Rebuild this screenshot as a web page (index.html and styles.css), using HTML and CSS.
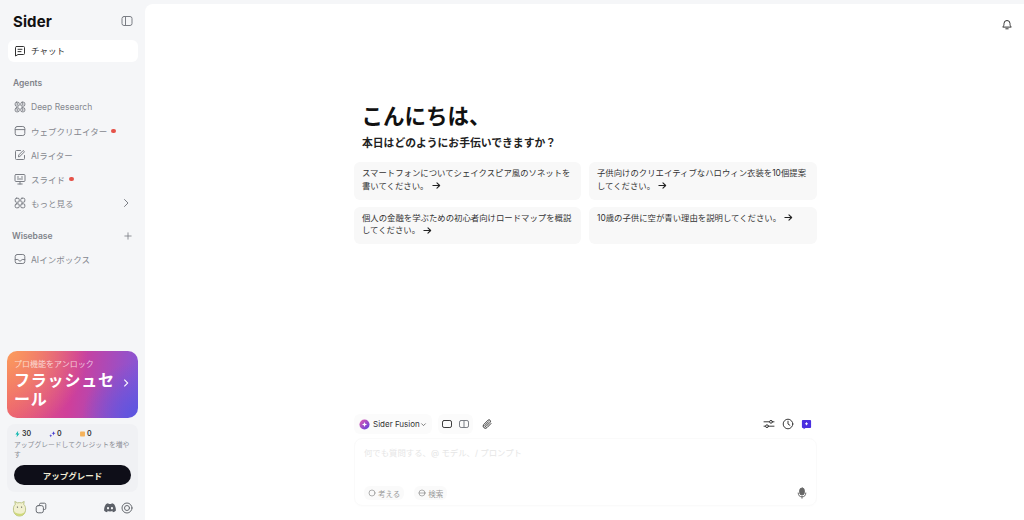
FILE: index.html
```html
<!DOCTYPE html>
<html lang="ja">
<head>
<meta charset="utf-8">
<title>Sider</title>
<link rel="stylesheet" href="styles.css">
</head>
<body>
<div class="app">
  <aside class="sidebar">
    <div class="brand">
      <span class="logo">Sider</span>
      <svg class="ic ic-side" viewBox="0 0 12 12"><rect x="1" y="1.5" width="10" height="9" rx="2"/><path d="M4.5 1.5v9"/></svg>
    </div>
    <div class="nav-item active">
      <svg class="ic" viewBox="0 0 12 12"><path d="M2.5 1.5h7a1 1 0 0 1 1 1v6a1 1 0 0 1-1 1H4L1.5 11V2.5a1 1 0 0 1 1-1z"/><path d="M4 4.3h4M4 6.6h3"/></svg>
      <span>チャット</span>
    </div>
    <div class="section-title">Agents</div>
    <div class="nav-item">
      <svg class="ic" viewBox="0 0 12 12"><rect x="1.2" y="1.2" width="4" height="4" rx="1.4"/><rect x="6.8" y="1.2" width="4" height="4" rx="1.4"/><rect x="1.2" y="6.8" width="4" height="4" rx="1.4"/><rect x="6.8" y="6.8" width="4" height="4" rx="1.4"/><path d="M3.200 2.400v1.600M8.800 2.400v1.600M3.200 8v1.600M8.800 8v1.600"/></svg>
      <span>Deep Research</span>
    </div>
    <div class="nav-item">
      <svg class="ic" viewBox="0 0 12 12"><rect x="1.2" y="1.5" width="9.6" height="9" rx="2"/><path d="M1.2 4.6h9.6"/></svg>
      <span>ウェブクリエイター</span><i class="dot"></i>
    </div>
    <div class="nav-item">
      <svg class="ic" viewBox="0 0 12 12"><path d="M10.5 6.5v3a1 1 0 0 1-1 1h-7a1 1 0 0 1-1-1v-7a1 1 0 0 1 1-1h4"/><path d="M4.5 7.5l.3-1.6 4.4-4.4 1.3 1.3-4.4 4.4z"/></svg>
      <span>AIライター</span>
    </div>
    <div class="nav-item">
      <svg class="ic" viewBox="0 0 12 12"><rect x="1" y="1.5" width="10" height="7" rx="1"/><path d="M6 8.5V11M3.8 11h4.4M3.500 4h1M7.500 4h1M3.500 6h5"/></svg>
      <span>スライド</span><i class="dot"></i>
    </div>
    <div class="nav-item">
      <svg class="ic" viewBox="0 0 12 12"><rect x="1.2" y="1.2" width="4" height="4" rx="1.2"/><rect x="6.8" y="1.2" width="4" height="4" rx="1.2"/><rect x="1.2" y="6.8" width="4" height="4" rx="1.2"/><rect x="6.8" y="6.8" width="4" height="4" rx="1.2"/></svg>
      <span>もっと見る</span>
      <svg class="ic ic-end" viewBox="0 0 12 12"><path d="M4.5 2.5L8 6l-3.5 3.5"/></svg>
    </div>
    <div class="section-title section-row">
      <span>Wisebase</span>
      <svg class="ic ic-plus" viewBox="0 0 12 12"><path d="M6 2.200v7.600M2.200 6h7.600"/></svg>
    </div>
    <div class="nav-item">
      <svg class="ic" viewBox="0 0 12 12"><rect x="1.2" y="1.5" width="9.6" height="9" rx="2"/><path d="M1.2 6.5h2.6L6 8.3l2.2-1.8h2.6"/></svg>
      <span>AIインボックス</span>
    </div>

    <div class="sidebar-foot">
      <div class="promo">
        <div class="promo-sub">プロ機能をアンロック</div>
        <div class="promo-row">
          <div class="promo-title">フラッシュセール</div>
          <svg class="promo-chev" viewBox="0 0 12 12"><path d="M4 2l4 4-4 4"/></svg>
        </div>
      </div>
      <div class="credits">
        <div class="credit-row">
          <span class="credit c1"><svg viewBox="0 0 10 10"><path d="M6 .5L2 5.6h2.4L3.6 9.5 8 4.2H5.4z"/></svg>30</span>
          <span class="credit c2"><svg viewBox="0 0 10 10"><path d="M6.5 1l.9 2.2L9.5 4 7.4 4.8 6.5 7 5.6 4.8 3.5 4l2.1-.8zM2.5 5.5l.6 1.4 1.4.6-1.4.6-.6 1.4-.6-1.4L.5 7.5l1.4-.6z"/></svg>0</span>
          <span class="credit c3"><svg viewBox="0 0 10 10"><rect x="1.5" y="1.5" width="7" height="7" rx="1"/></svg>0</span>
        </div>
        <p class="credit-text">アップグレードしてクレジットを増やす</p>
        <div class="upgrade"><span>アップグレード</span></div>
      </div>
      <div class="tools">
        <svg class="avatar" viewBox="0 0 16 18"><path d="M3.500 4.500L3 1.500 6 3c1.300-.4 2.800-.4 4 0l3-1.500-.5 3c1.300 1.400 2 3 2 5 0 4.800-2.700 7.500-6.500 7.500S1.500 14.300 1.500 9.500c0-2 .7-3.600 2-5z" fill="#f1f0cf" stroke="#a9b46a" stroke-width=".8"/><path d="M2 12c2 3.300 9.500 3.700 12 .2-.6 3.200-3.200 4.800-6 4.800S2.600 15.200 2 12z" fill="#cfd97a"/><circle cx="5.800" cy="7.500" r=".7" fill="#555"/><circle cx="10.200" cy="7.500" r=".7" fill="#555"/></svg>
        <svg class="ic ic-copy" viewBox="0 0 12 12"><path d="M4.500 3V2.500a1.300 1.300 0 0 1 1.300-1.300h3.700a1.300 1.300 0 0 1 1.300 1.300v3.700a1.300 1.300 0 0 1-1.300 1.300H9"/><rect x="1.200" y="3.600" width="7.200" height="7.200" rx="2"/></svg>
        <span class="tools-gap"></span>
        <svg class="discord" viewBox="0 0 14 11"><path d="M11.800 1A11 11 0 0 0 9 .1l-.4.800a10 10 0 0 0-3.200 0L5 .1A11 11 0 0 0 2.200 1C.4 3.600 0 6.200.2 8.700A11 11 0 0 0 3.600 10.500l.7-1.200-1.100-.5.300-.2a8 8 0 0 0 7 0l.3.200-1.100.5.700 1.200a11 11 0 0 0 3.400-1.800c.3-2.900-.5-5.400-2-7.700zM4.700 7.200c-.7 0-1.200-.6-1.200-1.400s.5-1.400 1.200-1.400 1.200.6 1.200 1.400-.5 1.400-1.200 1.400zm4.600 0c-.7 0-1.200-.6-1.200-1.400s.5-1.400 1.200-1.400 1.200.6 1.200 1.400-.5 1.400-1.200 1.400z"/></svg>
        <svg class="ic ic-target" viewBox="0 0 12 12"><circle cx="6" cy="6" r="5"/><circle cx="6" cy="6" r="2.500"/></svg>
      </div>
    </div>
  </aside>

  <main class="main">
    <div class="topbar">
      <svg class="ic ic-bell" viewBox="0 0 12 12"><path d="M2 8.800c.7-.8 1-1.500 1-3.300a3 3 0 0 1 6 0c0 1.800.3 2.500 1 3.300z"/><path d="M4.800 10.800h2.400"/></svg>
    </div>
    <div class="content">
      <h1 class="greet">こんにちは、</h1>
      <h2 class="ask">本日はどのようにお手伝いできますか？</h2>
      <div class="cards">
        <div class="card">スマートフォンについてシェイクスピア風のソネットを書いてください。<svg class="arrow" viewBox="0 0 10 10"><path d="M1 5h7.500M5.500 2l3 3-3 3"/></svg></div>
        <div class="card">子供向けのクリエイティブなハロウィン衣装を10個提案してください。<svg class="arrow" viewBox="0 0 10 10"><path d="M1 5h7.500M5.500 2l3 3-3 3"/></svg></div>
        <div class="card">個人の金融を学ぶための初心者向けロードマップを概説してください。<svg class="arrow" viewBox="0 0 10 10"><path d="M1 5h7.500M5.500 2l3 3-3 3"/></svg></div>
        <div class="card">10歳の子供に空が青い理由を説明してください。<svg class="arrow" viewBox="0 0 10 10"><path d="M1 5h7.500M5.500 2l3 3-3 3"/></svg></div>
      </div>
    </div>
    <div class="composer">
      <div class="toolbar">
        <div class="model">
          <svg class="model-logo" viewBox="0 0 12 12"><defs><linearGradient id="mg" x1="0" y1="0" x2="1" y2="1"><stop offset="0" stop-color="#e45bb0"/><stop offset="1" stop-color="#5a3fe0"/></linearGradient></defs><circle cx="6" cy="6" r="5.500" fill="url(#mg)"/><path d="M6 3.200l.8 2 2 .8-2 .8-.8 2-.8-2-2-.8 2-.8z" fill="#fff"/></svg>
          <span>Sider Fusion</span>
          <svg class="ic ic-caret" viewBox="0 0 12 12"><path d="M3.500 5L6 7.500 8.500 5"/></svg>
        </div>
        <div class="layouts">
          <svg class="ic ic-dark" viewBox="0 0 12 12"><rect x="1.500" y="2.500" width="9" height="7" rx="1.600"/></svg>
          <svg class="ic" viewBox="0 0 12 12"><rect x="1.500" y="2.500" width="9" height="7" rx="1.600"/><path d="M6 2.500v7"/></svg>
        </div>
        <svg class="ic ic-dark ic-clip" viewBox="0 0 12 12"><path d="M10 5.500L6 9.600a2.200 2.200 0 0 1-3.200-3.100l4.300-4.400a1.500 1.500 0 0 1 2.100 2.100L5 8.400a.7.700 0 0 1-1-1l3.600-3.700"/></svg>
        <span class="tools-gap"></span>
        <svg class="ic ic-dark ic-r" viewBox="0 0 12 12"><path d="M1 3.800h5.500M9.500 3.800H11M1 8.200h1.500M5.500 8.200H11"/><circle cx="8" cy="3.800" r="1.400"/><circle cx="4" cy="8.200" r="1.400"/></svg>
        <svg class="ic ic-dark ic-r" viewBox="0 0 12 12"><circle cx="6" cy="6" r="4.800"/><path d="M6 3.200V6l1.900 1.300"/></svg>
        <svg class="ic-new" viewBox="0 0 12 12"><path d="M2 1.200h8a1 1 0 0 1 1 1v6.600a1 1 0 0 1-1 1H5L2.800 11.200V9.800H2a1 1 0 0 1-1-1V2.200a1 1 0 0 1 1-1z" fill="#4a2fe0"/><path d="M6 3.600v3.200M4.400 5.200h3.200" stroke="#fff" stroke-width="1" fill="none"/></svg>
      </div>
      <div class="inputbox">
        <div class="placeholder">何でも質問する、@ モデル、/ プロンプト</div>
        <div class="input-foot">
          <span class="chip"><svg class="ic" viewBox="0 0 12 12"><circle cx="6" cy="6" r="4.500"/></svg>考える</span>
          <span class="chip"><svg class="ic" viewBox="0 0 12 12"><circle cx="6" cy="6" r="4.500"/><path d="M1.500 6h9"/></svg>検索</span>
          <span class="tools-gap"></span>
          <svg class="ic ic-mic" viewBox="0 0 12 12"><rect x="3.700" y="1" width="4.600" height="7" rx="2.300" fill="#666"/><path d="M2.200 6a3.800 3.800 0 0 0 7.600 0M6 9.800v1.400"/></svg>
        </div>
      </div>
    </div>
  </main>
</div>
</body>
</html>
```
FILE: styles.css
```css
* { box-sizing: border-box; }
html, body { margin: 0; height: 100%; }
body {
  font-family: Inter, "Noto Sans CJK JP", "Noto Sans", sans-serif;
  background: #f5f6f8;
  color: #333;
  overflow: hidden;
}
.app { display: flex; width: 1024px; height: 520px; }

.ic {
  width: 12px; height: 12px; flex: none;
  fill: none; stroke: #7b7e85; stroke-width: 1;
  stroke-linecap: round; stroke-linejoin: round;
}
.ic-dark { stroke: #3a3a3a; }
.tools-gap { flex: 1; }

/* sidebar */
.sidebar {
  width: 145px; flex: none;
  display: flex; flex-direction: column;
  padding: 0 7px 0 8px;
}
.brand {
  height: 40px; display: flex; align-items: center; justify-content: space-between;
  padding: 2px 5px 0 5px;
}
.logo { font-size: 15px; font-weight: 700; color: #111; letter-spacing: .1px; }
.nav-item {
  height: 24px; display: flex; align-items: center; gap: 5px;
  padding: 0 6px; font-size: 8.500px; color: #85888f;
}
.nav-item.active {
  height: 22px; background: #fff; border-radius: 6px; color: #333; margin-bottom: 9px;
  padding-bottom: 2px;
}
.nav-item.active .ic { stroke: #333; margin-top: 2px; }
.section-title {
  height: 24px; display: flex; align-items: center;
  padding: 0 5px; font-size: 8.500px; font-weight: 600; color: #80838a;
}
.section-row { justify-content: space-between; margin-top: 9px; margin-bottom: -1px; padding: 0 4px; }
.ic-plus { width: 10px; height: 10px; margin-right: 1px; }
.dot { width: 4.500px; height: 4.500px; border-radius: 50%; background: #e5534a; flex: none; margin-left: -1px; }
.ic-end { margin-left: auto; }

.sidebar-foot { margin: auto 0 0 -1px; display: flex; flex-direction: column; }
.promo {
  height: 67px; border-radius: 10px; padding: 8px 7px 0 7px;
  color: #fff;
  background:
    radial-gradient(circle at 100% 100%, #5a55e0 0, rgba(90,85,224,0) 38%),
    radial-gradient(circle at 0 0, #fb9c5d 0, rgba(251,156,93,0) 55%),
    linear-gradient(100deg, #f0606a 0%, #cf3f9a 50%, #7f58dc 100%);
}
.promo-sub { font-size: 8px; line-height: 11px; color: rgba(255,255,255,.7); }
.promo-row { display: flex; align-items: flex-start; }
.promo-title { font-size: 16px; font-weight: 700; line-height: 19px; flex: 1; letter-spacing: .8px; margin-top: 1px; }
.promo-chev { width: 10px; height: 12px; margin-top: 7px; fill: none; stroke: #fff; stroke-width: 1.300; flex: none; }
.credits {
  margin-top: 6px; height: 68px; background: #f0f1f4; border-radius: 8px;
  padding: 5px 7px 0 7px;
}
.credit-row { display: flex; height: 9px; align-items: center; font-size: 7px; font-weight: 600; color: #333; }
.credit { display: flex; align-items: center; gap: 1px; width: 30px; }
.credit.c1 { width: 35px; }
.credit svg { width: 7px; height: 8px; }
.c1 svg { fill: #13b8b0; }
.c2 svg { fill: #4a3fd0; }
.c3 svg { fill: #f5b25a; }
.credit-text { margin: 2px 0 0; font-size: 6.800px; line-height: 10px; color: #8b8e94; }
.upgrade {
  margin-top: 5px; height: 20px; border-radius: 10px; background: #0e0e18;
  display: flex; align-items: center; justify-content: center;
  font-size: 8.500px; font-weight: 700; color: #f1ecd6;
}
.tools { height: 28px; display: flex; align-items: center; gap: 8px; padding: 4px 5px 0 5px; }
.avatar { width: 15px; height: 17px; flex: none; }
.discord { width: 12px; height: 10px; fill: #5c6068; flex: none; margin-right: -3px; }
.ic-copy, .ic-target { stroke: #666a70; }

/* main */
.main {
  flex: 1; margin-top: 4px; background: #fff; border-top-left-radius: 8px;
  display: flex; flex-direction: column; min-width: 0;
}
.topbar { height: 40px; display: flex; justify-content: flex-end; align-items: center; padding: 0 11px 0 0; }
.ic-bell { stroke: #333; }
.content { margin-left: 209px; width: 463px; margin-top: 58px; }
.greet { margin: 0 0 0 7.500px; font-size: 21.500px; line-height: 28px; font-weight: 700; color: #111; }
.ask { margin: 6px 0 0 8px; font-size: 10.800px; line-height: 16px; font-weight: 700; color: #222; }
.cards { display: grid; grid-template-columns: 227px 228px; column-gap: 8px; row-gap: 7px; margin-top: 10px; }
.card {
  height: 37.500px; background: #f8f8f8; border-radius: 6px;
  padding: 5px 8px; font-size: 8.400px; line-height: 12.500px; color: #333;
}
.arrow {
  display: inline-block; width: 9px; height: 9px; margin-left: 3px; vertical-align: -1.500px;
  fill: none; stroke: #222; stroke-width: 1.200; stroke-linecap: round; stroke-linejoin: round;
}

.composer { margin: auto 0 0 209px; width: 463px; padding-bottom: 14px; }
.toolbar { height: 20px; display: flex; align-items: center; gap: 0; padding-right: 5px; margin-bottom: 4px; }
.model { display: flex; align-items: center; gap: 3px; padding: 0 4px 0 5px; height: 20px; font-size: 8px; color: #333; background: #fbfbfb; border-radius: 6px; }
.model-logo { width: 11px; height: 11px; flex: none; }
.ic-caret { width: 9px; height: 9px; margin-left: -4px; stroke: #555; }
.layouts { display: flex; gap: 5px; margin-left: 6px; padding: 0 3px; height: 20px; align-items: center; background: #fbfbfb; border-radius: 6px; }
.ic-clip { margin-left: 8px; }
.ic-r { margin-right: 7px; }
.ic-new { width: 11px; height: 11px; flex: none; }
.inputbox {
  height: 68px; border: 1px solid #fafafa; border-radius: 8px;
  padding: 8px 9px 5px 9px; display: flex; flex-direction: column;
  box-shadow: 0 1px 2px rgba(0,0,0,.012);
}
.placeholder { font-size: 8.400px; line-height: 12px; color: #e6e6e6; }
.input-foot { margin-top: auto; display: flex; align-items: center; gap: 10px; }
.chip {
  display: flex; align-items: center; gap: 2px; height: 14px; padding: 0 4px;
  font-size: 7.500px; color: #9a9a9a; background: #fafafa; border-radius: 6px;
}
.chip .ic { width: 8px; height: 8px; stroke: #8a8a8a; }
.ic-mic { stroke: #666; margin-right: -1px; }
```
